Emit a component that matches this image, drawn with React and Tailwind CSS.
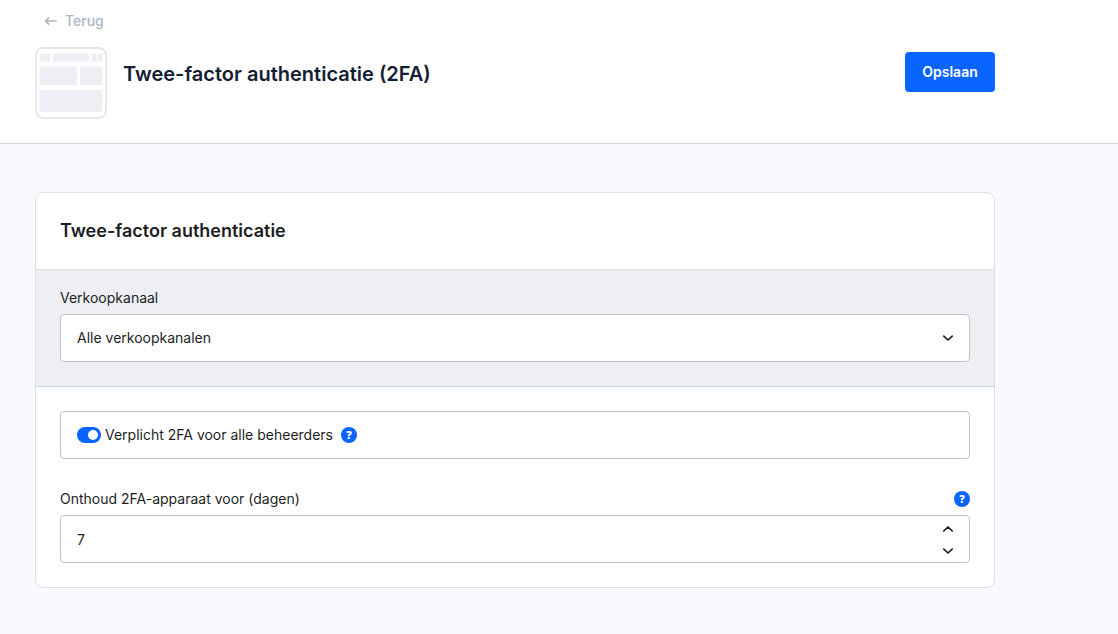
import { useState } from "react";

function Arrow({ className = "" }) {
  return (
    <svg viewBox="0 0 13 10" className={`h-[10px] w-[13px] ${className}`} fill="none" stroke="currentColor" strokeWidth="1.7" strokeLinecap="round" strokeLinejoin="round" aria-hidden="true">
      <path d="M12 5H1.5M4.6 1.9L1.5 5l3.1 3.1" />
    </svg>
  );
}

function Chevron({ className = "" }) {
  return (
    <svg viewBox="0 0 12 8" className={`h-2 w-3 ${className}`} fill="none" stroke="currentColor" strokeWidth="1.7" strokeLinecap="round" strokeLinejoin="round" aria-hidden="true">
      <path d="M1.8 2.1L6 6l4.2-3.9" />
    </svg>
  );
}

function Thumbnail() {
  return (
    <svg viewBox="0 0 72 72" className="size-[72px] shrink-0" aria-hidden="true">
      <rect x="1" y="1" width="70" height="70" rx="7" fill="#fff" stroke="#e6e6e6" strokeWidth="1.8" />
      <g fill="#eeeff4">
        <rect x="4.5" y="6.5" width="10.5" height="8" rx="1" />
        <rect x="18" y="6.5" width="36" height="8" rx="1" />
        <rect x="57" y="6.5" width="5" height="8" rx="1" />
        <rect x="63" y="6.5" width="4.5" height="8" rx="1" />
        <rect x="4.5" y="19.5" width="37.5" height="18.5" rx="1" />
        <rect x="45" y="19.5" width="22.5" height="18.5" rx="1" />
        <rect x="4.5" y="43" width="63" height="22" rx="1" />
      </g>
    </svg>
  );
}

function Help() {
  return (
    <button type="button" aria-label="Help" className="flex size-4 shrink-0 items-center justify-center rounded-full bg-[#0a64ff] pb-[2px] font-['Open_Sans',sans-serif] text-[11px] leading-none font-extrabold text-white">
      ?
    </button>
  );
}

export default function App() {
  const [days, setDays] = useState(7);
  const [required, setRequired] = useState(true);
  const field = "h-12 w-full appearance-none rounded-sm border border-[#c2c2cc] bg-white px-4 text-[14px] leading-5";

  return (
    <div className="min-h-screen bg-[#f9fafe] font-['Inter',sans-serif] text-[14px] leading-5 text-[#1c1e23]">
      <header className="border-b border-[#d1d9e0] bg-white px-[35px] pt-[11px] pb-6">
        <div className="max-w-[960px]">
          <a href="#terug" className="ml-[9px] inline-flex items-center gap-2 font-medium text-[#a9b7c6]">
            <Arrow />
            Terug
          </a>
          <div className="mt-4 flex items-start">
            <Thumbnail />
            <h1 className="mt-[13px] ml-4 flex-1 text-[20px] leading-7 font-semibold text-[#142032]">Twee-factor authenticatie (2FA)</h1>
            <button type="button" className="mt-[5px] h-10 min-w-[90px] rounded-sm bg-[#0a64ff] px-4 font-semibold text-white">Opslaan</button>
          </div>
        </div>
      </header>

      <main className="px-[35px] py-12">
        <section className="max-w-[960px] overflow-hidden rounded-lg border border-[#dddee8] bg-white">
          <h2 className="border-b border-[#dddee4] px-6 py-6 text-[18px] leading-7 font-semibold">Twee-factor authenticatie</h2>

          <div className="border-b border-[#ccd6dd] bg-[#eeeff3] px-6 pt-[18px] pb-6">
            <label htmlFor="channel" className="mb-[6px] block">Verkoopkanaal</label>
            <div className="relative">
              <select id="channel" className={field}>
                <option>Alle verkoopkanalen</option>
              </select>
              <Chevron className="pointer-events-none absolute top-5 right-4" />
            </div>
          </div>

          <div className="p-6">
            <div className="flex h-12 items-center rounded-sm border border-[#c2c2cc] px-4">
              <input
                id="required"
                type="checkbox"
                role="switch"
                checked={required}
                onChange={(e) => setRequired(e.target.checked)}
                className="flex h-4 w-6 shrink-0 appearance-none items-center rounded-full bg-[#9aa8b5] px-[3px] before:size-[10px] before:rounded-full before:bg-white checked:justify-end checked:bg-[#0a64ff]"
              />
              <label htmlFor="required" className="mr-2 ml-1">Verplicht 2FA voor alle beheerders</label>
              <Help />
            </div>

            <div className="mt-[30px] mb-[6px] flex items-center justify-between">
              <label htmlFor="days">Onthoud 2FA-apparaat voor (dagen)</label>
              <Help />
            </div>
            <div className="relative">
              <input
                id="days"
                type="text"
                inputMode="numeric"
                value={days}
                onChange={(e) => setDays(Number(e.target.value.replace(/\D/g, "")))}
                className={field}
              />
              <div className="absolute inset-y-0 right-4 flex flex-col justify-center gap-[6px] pt-[2px]">
                <button type="button" aria-label="Verhogen" onClick={() => setDays(days + 1)} className="flex h-4 items-center">
                  <Chevron className="rotate-180" />
                </button>
                <button type="button" aria-label="Verlagen" onClick={() => setDays(Math.max(0, days - 1))} className="flex h-4 items-center">
                  <Chevron />
                </button>
              </div>
            </div>
          </div>
        </section>
      </main>
    </div>
  );
}
